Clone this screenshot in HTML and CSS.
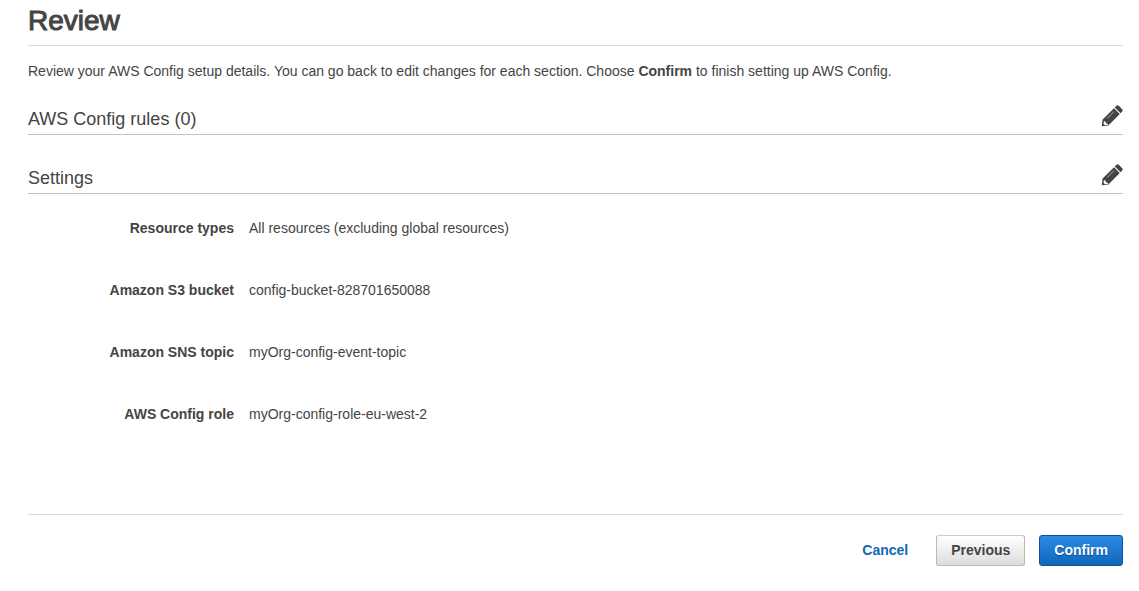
FILE: index.html
```html
<!DOCTYPE html>
<html lang="en">
<head>
<meta charset="utf-8">
<meta name="viewport" content="width=device-width, initial-scale=1">
<title>Review</title>
<link rel="stylesheet" href="styles.css">
</head>
<body>
<main class="page">
  <h1 class="page-title">Review</h1>
  <p class="intro">Review your AWS Config setup details. You can go back to edit changes for each section. Choose <strong>Confirm</strong> to finish setting up AWS Config.</p>

  <section class="section">
    <header class="section-head">
      <h2 class="section-title">AWS Config rules (0)</h2>
      <button class="edit" type="button" aria-label="Edit rules">
        <svg class="pencil" viewBox="0 0 22 22" aria-hidden="true"><path d="M.8 21.200l.8-6.600L13 3.200l5.800 5.800L7.400 20.400zM13.800 2.400l1.600-1.600q1.200-1 2.400 0l3.400 3.400q1 1.200 0 2.400l-1.600 1.600z"/><path class="pencil-cut" d="M3 15.900l1.800 1.100.3 1.500 1.500.3.900.9-3.500.6-1.500-1.500z"/><path class="pencil-shine" d="M6 13.600l7-7"/></svg>
      </button>
    </header>
  </section>

  <section class="section">
    <header class="section-head">
      <h2 class="section-title">Settings</h2>
      <button class="edit" type="button" aria-label="Edit settings">
        <svg class="pencil" viewBox="0 0 22 22" aria-hidden="true"><path d="M.8 21.200l.8-6.600L13 3.200l5.800 5.800L7.400 20.400zM13.800 2.400l1.600-1.600q1.200-1 2.400 0l3.400 3.400q1 1.200 0 2.400l-1.600 1.600z"/><path class="pencil-cut" d="M3 15.900l1.800 1.100.3 1.500 1.500.3.900.9-3.500.6-1.500-1.500z"/><path class="pencil-shine" d="M6 13.600l7-7"/></svg>
      </button>
    </header>
    <dl class="details">
      <dt>Resource types</dt><dd>All resources (excluding global resources)</dd>
      <dt>Amazon S3 bucket</dt><dd>config-bucket-828701650088</dd>
      <dt>Amazon SNS topic</dt><dd>myOrg-config-event-topic</dd>
      <dt>AWS Config role</dt><dd>myOrg-config-role-eu-west-2</dd>
    </dl>
  </section>

  <footer class="actions">
    <a class="cancel" href="#">Cancel</a>
    <button class="btn" type="button">Previous</button>
    <button class="btn btn-primary" type="button">Confirm</button>
  </footer>
</main>
</body>
</html>
```

FILE: styles.css
```css
* { box-sizing: border-box; }

body {
  margin: 0;
  background: #fff;
  color: #444;
  font: 14px/20px "Liberation Sans", Arial, sans-serif;
}

.page { padding: 0 16px 24px 28px; }

.page-title {
  margin: 0;
  padding: 5px 0 8px;
  border-bottom: 1px solid #d9d9d9;
  font-size: 28px;
  line-height: 32px;
  font-weight: 400;
  -webkit-text-stroke: 1px #444;
}

.intro { margin: 15px 0 21px; }

.section + .section { margin-top: 26px; }

.section-head {
  display: flex;
  justify-content: space-between;
  align-items: flex-end;
  height: 33px;
  border-bottom: 1px solid #c4c4c4;
}

.section-title {
  margin: 0;
  padding-bottom: 3px;
  font-size: 18px;
  line-height: 24px;
  font-weight: 400;
}

.edit {
  display: flex;
  padding: 0 0 7px;
  border: 0;
  background: none;
  color: #444;
  cursor: pointer;
}

.pencil { width: 22px; height: 22px; fill: currentColor; }
.pencil-cut { fill: #fff; }
.pencil-shine { fill: none; stroke: #aaa; stroke-width: 1; }

.details {
  display: grid;
  grid-template-columns: 206px 1fr;
  column-gap: 15px;
  row-gap: 42px;
  margin: 24px 0 90px;
}

.details dt { text-align: right; font-weight: 700; }
.details dd { margin: 0; }

.actions {
  display: flex;
  justify-content: flex-end;
  align-items: center;
  gap: 14px;
  padding-top: 20px;
  border-top: 1px solid #d9d9d9;
}

.cancel {
  margin-right: 14px;
  padding-bottom: 1px;
  color: #1166bb;
  font-weight: 700;
  text-decoration: none;
}

.btn {
  height: 31px;
  padding: 0 14px 1px;
  border: 1px solid #b8b8b8;
  border-top-color: #ccc;
  border-radius: 3px;
  background: linear-gradient(#fff, #ddd);
  color: #444;
  font: inherit;
  font-weight: 700;
}

.btn-primary {
  border-color: #0f4f94;
  background: linear-gradient(#2a8ae6, #1166bb);
  color: #fff;
  text-shadow: 0 1px 1px #0a4a8c;
}
```
